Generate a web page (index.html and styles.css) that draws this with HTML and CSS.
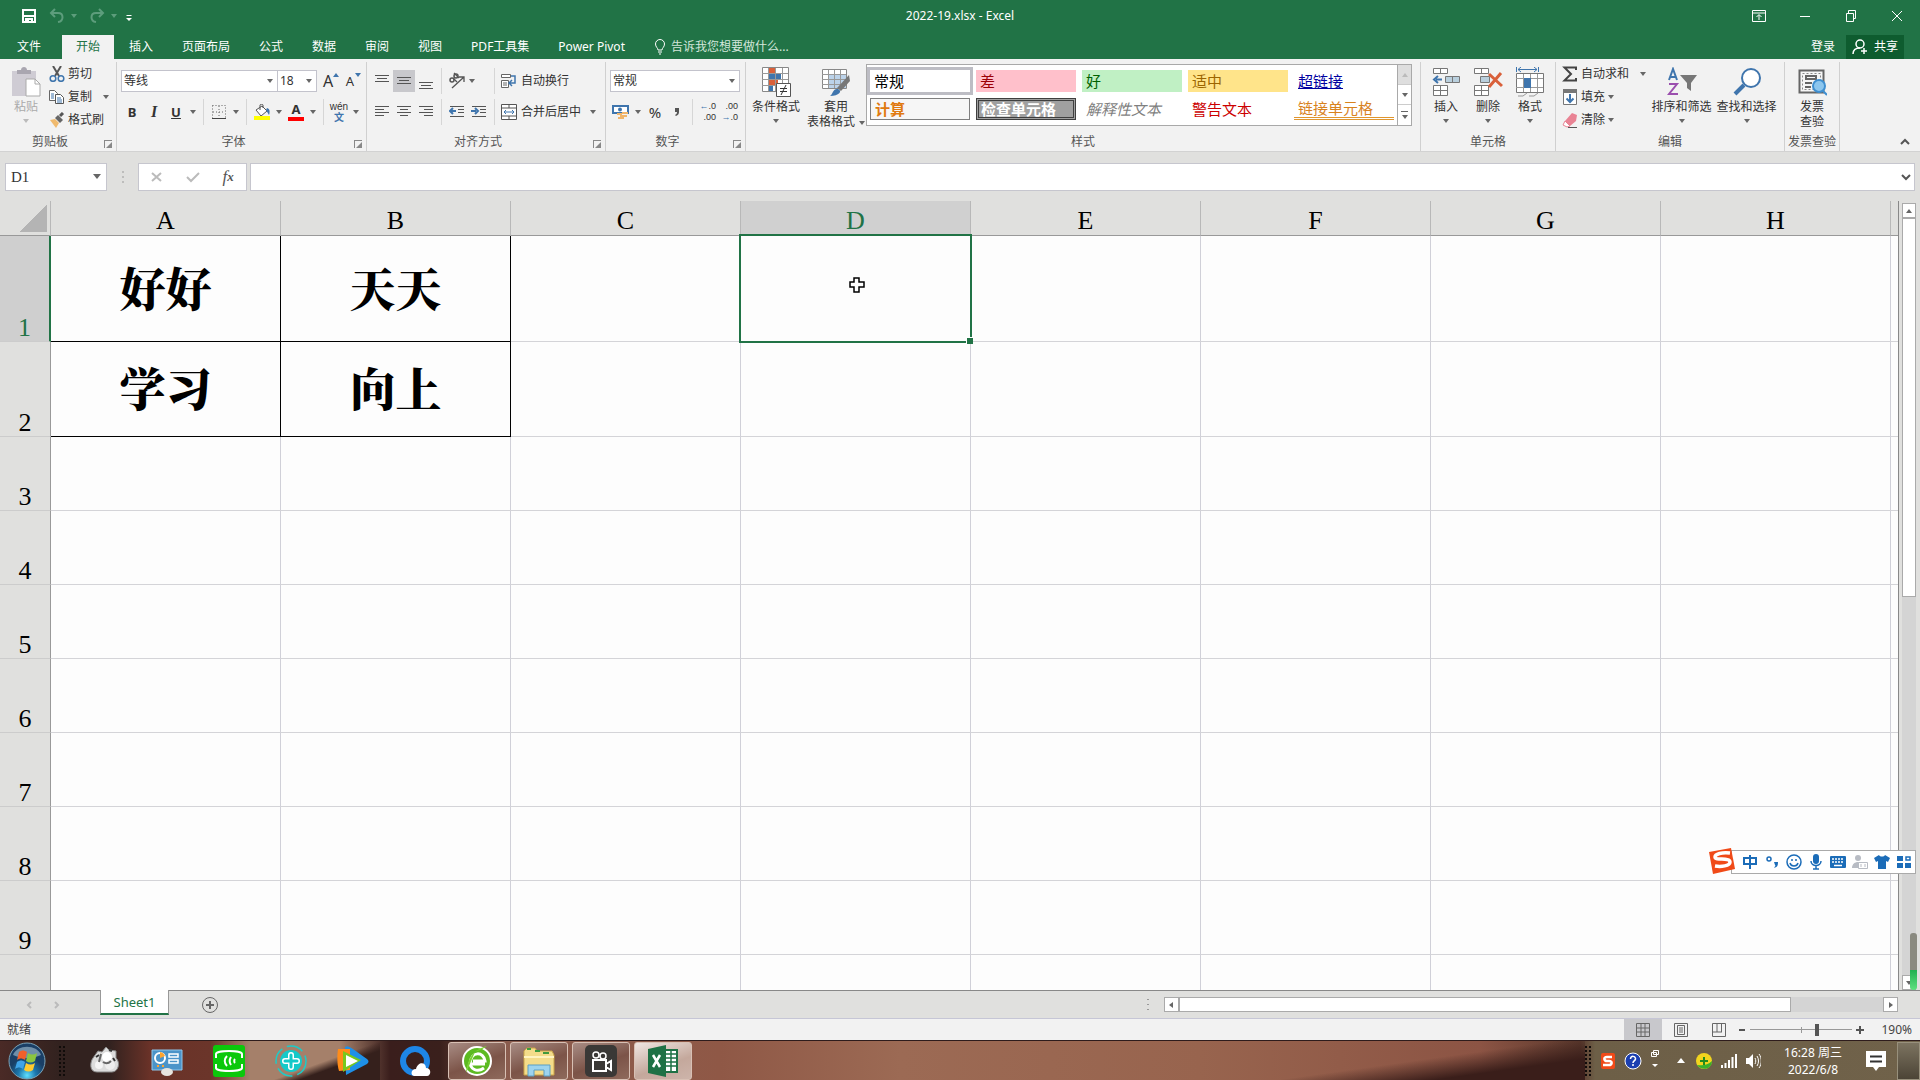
FILE: index.html
```
<!DOCTYPE html>
<html lang="zh-CN">
<head>
  <meta charset="UTF-8" />
  <title>2022-19.xlsx - Excel</title>
  <link rel="stylesheet" href="styles.css">
</head>
<body>
  <!-- title bar + tabs -->
  <header class="header">
    <div class="titlebar">
      <div class="quick">
        <button aria-label="保存"><svg width="16" height="16" viewBox="0 0 16 16"><path d="M2 2h12v12H2z M2 8h12 M5 14v-3h6v3" fill="none" stroke="#fff" stroke-width="2"/><path d="M6 12h2v2H6z" fill="#fff"/></svg></button>
        <button class="faded" aria-label="撤消"><svg width="16" height="16" viewBox="0 0 16 16"><path d="M6 1L2 5l4 4M2 5h7c6 0 6 8 0 9" fill="none" stroke="#5d9d7c" stroke-width="2"/></svg></button>
        <i class="caret faint"></i>
        <button class="faded" aria-label="恢复"><svg width="16" height="16" viewBox="0 0 16 16"><path d="M10 1l4 4-4 4M14 5H7c-6 0-6 8 0 9" fill="none" stroke="#5d9d7c" stroke-width="2"/></svg></button>
        <i class="caret faint"></i>
        <button class="custom" aria-label="自定义"><svg width="8" height="8" viewBox="0 0 8 8"><path d="M1.500 1.500h5" stroke="#fff"/><path d="M1 4h6L4 7z" fill="#fff"/></svg></button>
      </div>
      <div class="doc-title">2022-19.xlsx - Excel</div>
      <div class="window-buttons">
        <button aria-label="功能区显示选项"><svg width="14" height="12" viewBox="0 0 14 12"><path d="M.5.5h13v11H.5zM.5 3h13M7 10V5M4.500 7L7 4.500 9.500 7" fill="none" stroke="#fff"/></svg></button>
        <button aria-label="最小化"><svg width="12" height="12" viewBox="0 0 12 12"><path d="M1 6.500h10" stroke="#fff"/></svg></button>
        <button aria-label="还原"><svg width="12" height="12" viewBox="0 0 12 12"><path d="M1.500 3.500h7v8h-7zM3.500 3V.5h7v8H9" fill="none" stroke="#fff"/></svg></button>
        <button aria-label="关闭"><svg width="12" height="12" viewBox="0 0 12 12"><path d="M1 1l10 10M11 1L1 11" stroke="#fff"/></svg></button>
      </div>
    </div>
    <nav class="tabs">
      <button class="tab file">文件</button>
      <button class="tab active">开始</button>
      <button class="tab">插入</button>
      <button class="tab">页面布局</button>
      <button class="tab">公式</button>
      <button class="tab">数据</button>
      <button class="tab">审阅</button>
      <button class="tab">视图</button>
      <button class="tab">PDF工具集</button>
      <button class="tab">Power Pivot</button>
      <button class="tab tell-me"><svg width="12" height="16" viewBox="0 0 12 16"><path d="M4 11c0-2-2.500-3-2.500-6a4.500 4.500 0 0 1 9 0c0 3-2.500 4-2.500 6zM4 13h4M5 15h2" fill="none" stroke="#fff"/></svg>告诉我您想要做什么...</button>
      <button class="login">登录</button>
      <button class="share"><svg width="16" height="16" viewBox="0 0 16 16"><circle cx="8" cy="5" r="4" fill="none" stroke="#fff" stroke-width="1.500"/><path d="M1 15c0-4 3-6 7-6M12 9v6M9 12h6" fill="none" stroke="#fff" stroke-width="1.500"/></svg>共享</button>
    </nav>
  </header>

  <!-- ribbon -->
  <section class="ribbon">
    <div class="group clipboard">
      <div class="group-body">
        <button class="big disabled">
          <svg width="30" height="30" viewBox="0 0 30 30"><path d="M1 4h24v25H1z" fill="#cfccd4"/><path d="M6 3h4c0-4 6-4 6 0h4v4H6z" fill="#a9a6b0"/><path d="M15 12h9l5 5v12H15z" fill="#fff" stroke="#aaa"/><path d="M24 12v5h5" fill="none" stroke="#aaa"/></svg>
          <span>粘贴</span><i class="caret faint-grey"></i>
        </button>
        <div class="stack">
          <button class="item"><svg width="16" height="16" viewBox="0 0 16 16"><path d="M4 0l6 10M12 0L6 10" stroke="#555" stroke-width="2"/><circle cx="4" cy="12.500" r="2.800" fill="none" stroke="#3f75ad" stroke-width="1.500"/><circle cx="12" cy="12.500" r="2.800" fill="none" stroke="#3f75ad" stroke-width="1.500"/></svg>剪切</button>
          <button class="item"><svg width="16" height="16" viewBox="0 0 16 16"><path d="M.5 1.500h5l3 3v7h-8z" fill="#fff" stroke="#666"/><path d="M6.500 5.500h5l3 3v6h-8z" fill="#fff" stroke="#555"/><path d="M2 5h3M2 7h3M2 9h3M8 9h4M8 11h5M8 13h5" stroke="#3f75ad"/></svg>复制<i class="caret far"></i></button>
          <button class="item"><svg width="16" height="16" viewBox="0 0 16 16"><path d="M1 8l5-1 4 4-3 5z" fill="#f0ba6e"/><path d="M6 6l3-3 5 5-3 3z" fill="#666"/><path d="M11 4l3-3" stroke="#555" stroke-width="3"/></svg>格式刷</button>
        </div>
      </div>
      <div class="group-label">剪贴板</div><i class="launcher"></i>
    </div>

    <div class="group font">
      <div class="group-body rows">
        <div class="row">
          <label class="combo name"><select aria-label="字体"><option>等线</option></select><i class="caret"></i></label>
          <label class="combo size"><select aria-label="字号"><option>18</option></select><i class="caret"></i></label>
          <button class="tool grow" aria-label="增大字号">A<i class="up"></i></button>
          <button class="tool shrink" aria-label="减小字号">A<i class="down"></i></button>
        </div>
        <div class="row">
          <button class="tool"><b>B</b></button>
          <button class="tool serif"><i>I</i></button>
          <button class="tool"><u>U</u></button>
          <i class="drop"></i><i class="sep"></i>
          <button class="tool" aria-label="边框"><svg width="14" height="14" viewBox="0 0 14 14"><path d="M.5.5h13v13H.5zM7 1v12M1 7h12" fill="none" stroke="#666" stroke-dasharray="1 2"/><path d="M0 13.500h14" stroke="#444"/></svg></button>
          <i class="drop"></i><i class="sep"></i>
          <button class="tool" aria-label="填充颜色"><svg width="18" height="16" viewBox="0 0 18 16"><path d="M3 6l6-4 5 5-6 5z" fill="#fff" stroke="#555"/><path d="M7 6V1c0-1 3-1 3 0v3" fill="none" stroke="#555"/><path d="M14 4c3 1 3 4 2 7l-3-5z" fill="#3f75ad"/><path d="M1 12h16v4H1z" fill="#ff0"/></svg></button>
          <i class="drop"></i>
          <button class="tool font-color" aria-label="字体颜色">A</button>
          <i class="drop"></i><i class="sep"></i>
          <button class="tool pinyin"><span>wén</span><span>文</span></button>
          <i class="drop"></i>
        </div>
      </div>
      <div class="group-label">字体</div><i class="launcher"></i>
    </div>

    <div class="group align">
      <div class="group-body rows">
        <div class="row">
          <button class="tool" aria-label="顶端对齐"><svg width="16" height="18" viewBox="0 0 16 18"><path d="M1 3.500h14M3 6.500h10M1 9.500h14" stroke="#555"/></svg></button>
          <button class="tool pressed" aria-label="垂直居中"><svg width="16" height="18" viewBox="0 0 16 18"><path d="M1 5.500h14M3 8.500h10M1 11.500h14" stroke="#555"/></svg></button>
          <button class="tool" aria-label="底端对齐"><svg width="16" height="18" viewBox="0 0 16 18"><path d="M1 10.500h14M3 13.500h10M1 16.500h14" stroke="#555"/></svg></button>
          <i class="sep"></i>
          <button class="tool" aria-label="方向"><svg width="18" height="18" viewBox="0 0 18 18"><circle cx="4" cy="8" r="2" fill="none" stroke="#555" stroke-width="1.500"/><circle cx="8" cy="4" r="2" fill="none" stroke="#555" stroke-width="1.500"/><path d="M5 6l4 4M6 1l5 5M4 16L16 5M11 5h5v5" fill="none" stroke="#555" stroke-width="1.300"/></svg></button>
          <i class="drop wide"></i><i class="sep"></i>
          <button class="tool text"><svg width="16" height="16" viewBox="0 0 16 16"><path d="M.5 1.500h9v3h-9zM.5 7.500h7v7h-7zM2 10h4M2 12h4" fill="#fff" stroke="#666"/><path d="M10 3h4v7h-5M11 7L8 10l3 3" fill="none" stroke="#3f75ad" stroke-width="1.500"/></svg>自动换行</button>
        </div>
        <div class="row">
          <button class="tool" aria-label="左对齐"><svg width="16" height="14" viewBox="0 0 16 14"><path d="M1 1.500h14M1 4.500h9M1 7.500h14M1 10.500h9" stroke="#555"/></svg></button>
          <button class="tool" aria-label="居中"><svg width="16" height="14" viewBox="0 0 16 14"><path d="M1 1.500h14M4 4.500h8M1 7.500h14M4 10.500h8" stroke="#555"/></svg></button>
          <button class="tool" aria-label="右对齐"><svg width="16" height="14" viewBox="0 0 16 14"><path d="M1 1.500h14M6 4.500h9M1 7.500h14M6 10.500h9" stroke="#555"/></svg></button>
          <i class="sep"></i>
          <button class="tool" aria-label="减少缩进"><svg width="16" height="14" viewBox="0 0 16 14"><path d="M1 1.500h14M9 4.500h6M9 7.500h6M1 11.500h14" stroke="#555"/><path d="M7 6H2M4 3L1 6l3 3" fill="none" stroke="#3f75ad" stroke-width="2"/></svg></button>
          <button class="tool" aria-label="增加缩进"><svg width="16" height="14" viewBox="0 0 16 14"><path d="M1 1.500h14M9 4.500h6M9 7.500h6M1 11.500h14" stroke="#555"/><path d="M0 6h5M4 3l3 3-3 3" fill="none" stroke="#3f75ad" stroke-width="2"/></svg></button>
          <i class="sep"></i>
          <button class="tool text"><svg width="16" height="16" viewBox="0 0 16 16"><path d="M.5.500h15v15H.5zM.5 4h15M.5 12h15M8 0v4M8 12v4" fill="#fff" stroke="#555"/><path d="M3 8h10M5 6L3 8l2 2M11 6l2 2-2 2" fill="none" stroke="#3f75ad"/></svg>合并后居中</button>
          <i class="drop end"></i>
        </div>
      </div>
      <div class="group-label">对齐方式</div><i class="launcher"></i>
    </div>

    <div class="group number">
      <div class="group-body rows">
        <div class="row">
          <label class="combo format"><select aria-label="数字格式"><option>常规</option></select><i class="caret"></i></label>
        </div>
        <div class="row">
          <button class="tool" aria-label="会计数字格式"><svg width="18" height="16" viewBox="0 0 18 16"><path d="M1 2h15v7H1z" fill="#fff" stroke="#3f75ad" stroke-width="2"/><circle cx="8" cy="5.500" r="2" fill="#3f75ad"/><path d="M10 9h6M8 12h7M5 10h5M6 14h6" stroke="#f0b56a" stroke-width="2"/></svg></button>
          <i class="drop"></i>
          <button class="tool percent">%</button>
          <button class="tool" aria-label="千位分隔样式"><svg width="6" height="10" viewBox="0 0 6 10"><path d="M1 1h4v4c0 2-1 3-3 4l-1-1c1-1 2-1 2-3H1z" fill="#555"/></svg></button>
          <i class="sep"></i>
          <button class="tool decimal"><span><em>←</em>.0</span><span>.00</span></button>
          <button class="tool decimal"><span>.00</span><span><em>→</em>.0</span></button>
        </div>
      </div>
      <div class="group-label">数字</div><i class="launcher"></i>
    </div>

    <div class="group styles">
      <div class="group-body">
        <button class="big">
          <svg width="30" height="30" viewBox="0 0 30 30"><path d="M1.500.500h26v24h-26z" fill="#fff" stroke="#888"/><path d="M8 1h7v6H8zM8 13h9v6H8z" fill="#d9603a"/><path d="M8 7h12v6H8zM8 19h4v5H8z" fill="#3f75ad"/><path d="M1 6.500h26M1 12.500h26M1 18.500h26M7.500 1v23M14.500 1v23M21.500 1v23" stroke="#999" fill="none"/><path d="M15.500 16.500h14v13h-14z" fill="#fff" stroke="#555"/><path d="M19 21.500h7M19 24.500h7M25 18l-5 10" stroke="#333"/></svg>
          <span>条件格式</span><i class="caret"></i>
        </button>
        <button class="big">
          <svg width="30" height="30" viewBox="0 0 30 30"><path d="M1.500 2.500h24v19h-24z" fill="#fff" stroke="#888"/><path d="M8 8h17v13H8z" fill="#bcd3ea"/><path d="M1 7.500h24M1 12.500h24M1 17.500h24M7.500 3v18M13.500 3v18M19.500 3v18" stroke="#999"/><path d="M28 8l1 6-9 10-4-3z" fill="#777"/><path d="M9 29c3-2 3-8 8-7 5 2 1 7-8 7z" fill="#3f75ad"/></svg>
          <span>套用</span><span>表格格式<i class="caret inline"></i></span>
        </button>
        <div class="gallery">
          <div class="gallery-cells">
            <button class="style selected">常规</button>
            <button class="style bad">差</button>
            <button class="style good">好</button>
            <button class="style neutral">适中</button>
            <button class="style link">超链接</button>
            <button class="style calc">计算</button>
            <button class="style check">检查单元格</button>
            <button class="style explain">解释性文本</button>
            <button class="style warn">警告文本</button>
            <button class="style linked">链接单元格</button>
          </div>
          <div class="gallery-scroll">
            <button class="off" aria-label="上"><i class="caret flip"></i></button>
            <button aria-label="下"><i class="caret"></i></button>
            <button class="more" aria-label="其他"><i class="line"></i><i class="caret"></i></button>
          </div>
        </div>
      </div>
      <div class="group-label">样式</div>
    </div>

    <div class="group cells">
      <div class="group-body">
        <button class="big">
          <svg width="30" height="30" viewBox="0 0 30 30"><path d="M2.500 1.500h14v5h-14zM9.500 1v6M2.500 18.500h14v10h-14zM9.500 18v11M2 23.500h15" fill="#fff" stroke="#777"/><path d="M14.500 9.500h14v6h-14zM21.500 9v7" fill="#b9cfdd" stroke="#777"/><path d="M11 12.500H5M7 9l-4 3.500L7 16" fill="none" stroke="#3f75ad" stroke-width="2"/></svg>
          <span>插入</span><i class="caret"></i>
        </button>
        <button class="big">
          <svg width="30" height="30" viewBox="0 0 30 30"><path d="M1.500 1.500h14v5h-14zM8.500 1v6M1.500 18.500h14v10h-14zM8.500 18v11M1 23.500h15" fill="#fff" stroke="#777"/><path d="M7.500 9.500h9v6h-9z" fill="#b9cfdd" stroke="#777"/><path d="M16 7l13 12M28 6L16 20" fill="none" stroke="#d9603a" stroke-width="3"/></svg>
          <span>删除</span><i class="caret"></i>
        </button>
        <button class="big">
          <svg width="30" height="30" viewBox="0 0 30 30"><path d="M1.500 6.500h27v19h-27z" fill="#fff" stroke="#777"/><path d="M1 11.500h27M1 20.500h27M8.500 7v18M15.500 7v18M22.500 7v18M3 29h5l4-3M14 29h5l4-3" fill="none" stroke="#999"/><path d="M9 11h7v10H9z" fill="#3f75ad"/><path d="M1.500 0v5M23.500 0v5M3 2.500h19M6 0L3 2.500 6 5M19 0l3 2.500L19 5" fill="none" stroke="#3f75ad"/></svg>
          <span>格式</span><i class="caret"></i>
        </button>
      </div>
      <div class="group-label">单元格</div>
    </div>

    <div class="group edit">
      <div class="group-body">
        <div class="stack">
          <button class="item"><svg width="16" height="16" viewBox="0 0 16 16"><path d="M14 4V1.500H2.500L9 8l-6.500 6.500H14V12" fill="none" stroke="#444" stroke-width="2"/></svg>自动求和<i class="caret far"></i></button>
          <button class="item"><svg width="16" height="16" viewBox="0 0 16 16"><path d="M1.500.500h13v15h-13z" fill="#fff" stroke="#777"/><path d="M1 0h14v4H1z" fill="#777"/><path d="M8 5v8M4.500 9.500L8 13l3.500-3.500" fill="none" stroke="#3f75ad" stroke-width="2"/></svg>填充<i class="caret"></i></button>
          <button class="item"><svg width="16" height="16" viewBox="0 0 16 16"><path d="M3 9l7-8 5 2-1 6-6 5z" fill="#e98394"/><path d="M3 9l5 5-3 1-4-2z" fill="#fff" stroke="#e98394"/><path d="M6 15.500h9" stroke="#555"/></svg>清除<i class="caret"></i></button>
        </div>
        <button class="big">
          <svg width="30" height="30" viewBox="0 0 30 30"><path d="M2 13L6 2l4 11M3 10h6" fill="none" stroke="#3f75ad" stroke-width="2"/><path d="M2 17h8L2 27h9" fill="none" stroke="#9b4fae" stroke-width="2"/><path d="M13 8h17l-6 8v8l-4-3v-5z" fill="#777"/></svg>
          <span>排序和筛选</span><i class="caret"></i>
        </button>
        <button class="big">
          <svg width="30" height="30" viewBox="0 0 30 30"><circle cx="19" cy="11" r="9" fill="#fff" stroke="#3f75ad" stroke-width="2"/><path d="M12 18L3 27" stroke="#3f75ad" stroke-width="4"/></svg>
          <span>查找和选择</span><i class="caret"></i>
        </button>
      </div>
      <div class="group-label">编辑</div>
    </div>

    <div class="group invoice">
      <div class="group-body">
        <button class="big">
          <svg width="30" height="30" viewBox="0 0 30 30"><path d="M2.500 3.500h24v22h-24z" fill="#f6f6f6" stroke="#666" stroke-width="2"/><path d="M5.500 6.500h18v16h-18z" fill="none" stroke="#888" stroke-dasharray="2 2"/><path d="M9 9h10v3H9zM8 16h7M8 20h6" fill="none" stroke="#666" stroke-width="2"/><circle cx="22" cy="19" r="6" fill="#8cc6ee" stroke="#3f8fd0" stroke-width="2"/><path d="M26 24l4 4" stroke="#3f8fd0" stroke-width="2"/></svg>
          <span>发票</span><span>查验</span>
        </button>
      </div>
      <div class="group-label">发票查验</div>
    </div>
    <button class="collapse" aria-label="折叠功能区"><svg width="10" height="8" viewBox="0 0 10 8"><path d="M1 6l4-4 4 4" fill="none" stroke="#555" stroke-width="2"/></svg></button>
  </section>

  <!-- formula bar -->
  <section class="formula">
    <label class="name-box"><input type="text" value="D1" aria-label="名称框"><i class="caret big-caret"></i></label>
    <span class="dots"></span>
    <div class="fx-box">
      <button aria-label="取消"><svg width="12" height="12" viewBox="0 0 12 12"><path d="M1 2l9 8M10 2l-9 8" stroke="#bbb" stroke-width="2"/></svg></button>
      <button aria-label="输入"><svg width="14" height="12" viewBox="0 0 14 12"><path d="M1 6l4 4 8-8" fill="none" stroke="#bbb" stroke-width="2"/></svg></button>
      <button class="fx">f<small>x</small></button>
    </div>
    <div class="formula-input">
      <input type="text" aria-label="编辑栏">
      <svg width="10" height="8" viewBox="0 0 10 8"><path d="M1 2l4 4 4-4" fill="none" stroke="#555" stroke-width="2"/></svg>
    </div>
  </section>

  <!-- sheet -->
  <main class="sheet-area">
    <div class="sheet">
      <table>
        <colgroup><col class="c-head"><col><col><col><col><col><col><col><col><col class="c-rest"></colgroup>
        <thead>
          <tr><th class="corner"></th><th>A</th><th>B</th><th>C</th><th class="current">D</th><th>E</th><th>F</th><th>G</th><th>H</th><th></th></tr>
        </thead>
        <tbody>
          <tr class="r1"><th class="current">1</th><td class="boxed">好好</td><td class="boxed">天天</td><td></td><td class="cursor-cell"><div class="selection"></div><svg class="pointer" width="16" height="16" viewBox="0 0 16 16"><path d="M5 1h5v4h5v5h-5v5H5v-5H1V5h4z" fill="#fff" stroke="#000" stroke-width="1.500"/></svg></td><td></td><td></td><td></td><td></td><td></td></tr>
          <tr class="r2"><th>2</th><td class="boxed">学习</td><td class="boxed">向上</td><td></td><td></td><td></td><td></td><td></td><td></td><td></td></tr>
          <tr><th>3</th><td></td><td></td><td></td><td></td><td></td><td></td><td></td><td></td><td></td></tr>
          <tr><th>4</th><td></td><td></td><td></td><td></td><td></td><td></td><td></td><td></td><td></td></tr>
          <tr><th>5</th><td></td><td></td><td></td><td></td><td></td><td></td><td></td><td></td><td></td></tr>
          <tr><th>6</th><td></td><td></td><td></td><td></td><td></td><td></td><td></td><td></td><td></td></tr>
          <tr><th>7</th><td></td><td></td><td></td><td></td><td></td><td></td><td></td><td></td><td></td></tr>
          <tr><th>8</th><td></td><td></td><td></td><td></td><td></td><td></td><td></td><td></td><td></td></tr>
          <tr><th>9</th><td></td><td></td><td></td><td></td><td></td><td></td><td></td><td></td><td></td></tr>
          <tr class="last"><th></th><td></td><td></td><td></td><td></td><td></td><td></td><td></td><td></td><td></td></tr>
        </tbody>
      </table>
    </div>
    <div class="vscroll">
      <button aria-label="向上滚动"><i class="caret flip"></i></button>
      <div class="track"><div class="thumb"></div></div>
      <button aria-label="向下滚动"><i class="caret"></i></button>
      <div class="meter"></div>
    </div>
  </main>

  <section class="sheet-bar">
    <div class="sheet-nav"><svg width="6" height="8" viewBox="0 0 6 8"><path d="M5 1L2 4l3 3" fill="none" stroke="#bbb" stroke-width="2"/></svg><svg width="6" height="8" viewBox="0 0 6 8"><path d="M1 1l3 3-3 3" fill="none" stroke="#bbb" stroke-width="2"/></svg></div>
    <button class="sheet-tab">Sheet1</button>
    <button class="add-sheet" aria-label="新工作表"><svg width="18" height="18" viewBox="0 0 18 18"><circle cx="9" cy="9" r="7.500" fill="none" stroke="#666"/><path d="M9 5v8M5 9h8" stroke="#666" stroke-width="2"/></svg></button>
    <div class="hscroll">
      <span class="dots"></span>
      <button aria-label="向左滚动"><i class="caret left"></i></button>
      <div class="track"><div class="thumb"></div></div>
      <button aria-label="向右滚动"><i class="caret right"></i></button>
    </div>
  </section>

  <footer class="status">
    <span>就绪</span>
    <div class="views">
      <button class="on" aria-label="普通"><svg width="14" height="14" viewBox="0 0 14 14"><path d="M.5.500h13v13H.5zM5 1v12M9 1v12M1 5h12M1 9h12" fill="none" stroke="#666"/></svg></button>
      <button aria-label="页面布局"><svg width="14" height="14" viewBox="0 0 14 14"><path d="M.5.500h13v13H.5zM3.500 2.500h7v9h-7zM5 5h4M5 7h4M5 9h4" fill="none" stroke="#666"/></svg></button>
      <button aria-label="分页预览"><svg width="14" height="14" viewBox="0 0 14 14"><path d="M.5.500h13v13H.5zM5 1v8M9.500 1v8M1 9h9" fill="none" stroke="#666"/></svg></button>
    </div>
    <div class="zoom">
      <button aria-label="缩小"><svg width="8" height="8" viewBox="0 0 8 8"><path d="M1 4h6" stroke="#555" stroke-width="2"/></svg></button>
      <input type="range" min="0" max="100" value="66" aria-label="缩放">
      <button aria-label="放大"><svg width="8" height="8" viewBox="0 0 8 8"><path d="M0 4h8M4 0v8" stroke="#555" stroke-width="2"/></svg></button>
      <span>190%</span>
    </div>
  </footer>

  <!-- taskbar -->
  <section class="taskbar">
    <button class="start" aria-label="开始"><svg width="38" height="38" viewBox="0 0 38 38"><defs><radialGradient id="orb" cy=".9"><stop offset="0" stop-color="#5fe0ff"/><stop offset=".5" stop-color="#1b77ad"/><stop offset="1" stop-color="#1a3f66"/></radialGradient></defs><circle cx="19" cy="19" r="18" fill="url(#orb)" stroke="#7aa3b8"/><path d="M5 13C9 2 29 2 33 13c-8 4-20 4-28 0z" fill="#a8c4d6" opacity=".6"/><path d="M11 10c3-2 5-2 8 0l-2 8c-3-2-5-2-8 0z" fill="#f0602a"/><path d="M20 11c3 2 6 2 9 0l-2 8c-3 2-6 2-9 0z" fill="#8cc63f"/><path d="M9 20c3-2 5-2 8 0l-2 7c-3-2-5-2-8 0z" fill="#3fa4e8"/><path d="M18 21c3 2 6 2 9 0l-2 7c-3 2-6 2-9 0z" fill="#ffcb2e"/></svg></button>
    <i class="grip"></i>
    <button class="app" aria-label="应用"><svg width="32" height="32" viewBox="0 0 32 32"><path d="M4 13l5-7 4 1 4-5 3 3 7 1v7c5 5 2 14-4 14H8C0 27 1 17 4 13z" fill="#dcdcdc" stroke="#888"/><path d="M7 12l3-2M10 19l3-1M20 5l3 1M24 13l2 3" stroke="#333" stroke-width="2"/><circle cx="18" cy="12" r="5" fill="#fff"/><circle cx="10" cy="20" r="4" fill="#f4f4f4"/><circle cx="21" cy="20" r="5" fill="#eee"/><path d="M12 9l-2 8M14 17c3 2 6 1 8-1" fill="none" stroke="#666" stroke-width="2"/></svg></button>
    <button class="app" aria-label="控制面板"><svg width="32" height="32" viewBox="0 0 32 32"><path d="M1 5h30v20H1z" fill="#4b94c9" stroke="#8fc7ec"/><circle cx="9" cy="13" r="5" fill="none" stroke="#fff" stroke-width="2"/><path d="M9 13V7a6 6 0 0 1 5 4z" fill="#ffa52e"/><path d="M18 9h9v3h-9zM18 15h9v3h-9z" fill="none" stroke="#fff" stroke-width="1.500"/><path d="M6 21h2M11 21h2" stroke="#ffa52e" stroke-width="2"/><ellipse cx="16" cy="27" rx="6" ry="4" fill="#e8e4df"/></svg></button>
    <button class="app" aria-label="投屏"><svg width="32" height="32" viewBox="0 0 32 32"><rect width="32" height="32" rx="3" fill="#0bc80b"/><path d="M3 13V9c0-4 26-4 26 0v4M3 19v4c0 4 26 4 26 0v-4" fill="none" stroke="#fff" stroke-width="2"/><path d="M14 11c-3 3-3 7 0 10M18 12c-2 3-2 5 0 8M22 14c-1 1-1 3 0 4" fill="none" stroke="#fff" stroke-width="2"/></svg></button>
    <button class="app" aria-label="医疗"><svg width="32" height="32" viewBox="0 0 32 32"><circle cx="16" cy="16" r="15" fill="none" stroke="#1ccbc8" stroke-width="1.500" stroke-dasharray="17 5"/><circle cx="16" cy="16" r="11" fill="#14c9c8"/><path d="M13 10a3 3 0 0 1 6 0v12a3 3 0 0 1-6 0zM10 13h12a3 3 0 0 1 0 6H10a3 3 0 0 1 0-6z" fill="#fff"/><path d="M14.500 10a1.500 1.500 0 0 1 3 0v12a1.500 1.500 0 0 1-3 0zM10 14.500h12a1.500 1.500 0 0 1 0 3H10a1.500 1.500 0 0 1 0-3z" fill="#14c9c8"/></svg></button>
    <button class="app" aria-label="播放器"><svg width="32" height="32" viewBox="0 0 32 32"><path d="M8 2c3-2 5 0 22 12 2 2 2 3 0 5L9 30z" fill="#1e90e8"/><path d="M1 4h12v21L2 26c-2-6-2-16-1-22z" fill="#ff8c1a"/><path d="M6 6l18 9-18 12z" fill="#78c81e"/><path d="M9 10l12 6-12 6z" fill="#fff"/></svg></button>
    <button class="app" aria-label="浏览器"><svg width="32" height="32" viewBox="0 0 32 32"><circle cx="16" cy="16" r="12" fill="none" stroke="#1e86e6" stroke-width="6"/><path d="M15 31c-4-1-3-7 2-7 2-8 10-7 10-1 6 0 5 8 1 8z" fill="#fff"/></svg></button>
    <div class="running">
      <button class="win" aria-label="360浏览器"><svg width="32" height="32" viewBox="0 0 32 32"><circle cx="16" cy="16" r="14" fill="#5cba22" stroke="#fff" stroke-width="2"/><path d="M24 19H9c1-14 14-12 15-3H12M23 23c-7 5-14 1-14-6" fill="none" stroke="#fff" stroke-width="3"/><path d="M5 28C7 10 15 4 26 1c-5 4-8 4-12 6" fill="#7ad332"/></svg></button>
      <button class="win" aria-label="资源管理器"><svg width="34" height="32" viewBox="0 0 34 32"><path d="M2 6l3-3h8l2 3h15l2 4v20H2z" fill="#f4dc8a" stroke="#c9a449"/><path d="M5 4h4M13 6h5M21 8h6" stroke="#3f9a3f" stroke-width="2"/><path d="M2 12h30" stroke="#fff3c0" stroke-width="2"/><path d="M6 31V20h22v11h-6v-6H12v6z" fill="#9dd3ee" stroke="#5b9fc4"/></svg></button>
      <button class="win" aria-label="录屏"><svg width="32" height="32" viewBox="0 0 32 32"><rect width="32" height="32" rx="5" fill="#3a3836"/><circle cx="11" cy="10" r="3" fill="none" stroke="#fff" stroke-width="1.500"/><circle cx="18" cy="11" r="3" fill="none" stroke="#fff" stroke-width="1.500"/><path d="M8 15h13v11H8zM21 19l5-3v9l-5-3" fill="none" stroke="#fff" stroke-width="2"/></svg></button>
      <button class="win active" aria-label="Excel"><svg width="30" height="32" viewBox="0 0 30 32"><path d="M16 5h13v22H16z" fill="#fff" stroke="#1e7145" stroke-width="2"/><path d="M16 9h12M16 13h12M16 17h12M16 21h12M23 6v20" stroke="#1e7145" stroke-width="1.500"/><path d="M0 4l18-4v32L0 28z" fill="#1e7145"/><path d="M5 10l7 12M12 10L5 22" stroke="#fff" stroke-width="2.500"/></svg></button>
    </div>
    <div class="tray">
      <i class="grip"></i>
      <svg class="t-s" width="16" height="18" viewBox="0 0 16 18"><rect x="1" y="1" width="14" height="16" rx="2" fill="#f04a18"/><path d="M12 5H7c-4 0-3 4 0 4h2c4 0 3 4 0 4H3" fill="none" stroke="#fff" stroke-width="2.500"/></svg>
      <svg class="t-help" width="18" height="18" viewBox="0 0 18 18"><circle cx="9" cy="9" r="8" fill="#1b3fb0" stroke="#fff"/><path d="M6.500 7c0-4 5.500-3 5 0-.5 2-2.500 2-2.500 4M9 12v2" fill="none" stroke="#fff" stroke-width="1.500"/></svg>
      <svg class="t-restore" width="10" height="20" viewBox="0 0 10 20"><path d="M3.500 1.500h5v4h-5zM1.500 3.500h5v4h-5z" fill="none" stroke="#fff"/><path d="M2 15h6l-3 3z" fill="#fff"/></svg>
      <i class="caret white flip"></i>
      <svg width="18" height="18" viewBox="0 0 18 18"><circle cx="9" cy="9" r="8" fill="#f2d51e"/><path d="M2 13c4 6 15 5 15-4-4 4-9 5-15 4z" fill="#39b02c"/><path d="M9 5v8M5 9h8" stroke="#238c1e" stroke-width="2"/></svg>
      <svg width="16" height="16" viewBox="0 0 16 16"><path d="M1 15v-3M4.500 15v-5M8 15V7M11.500 15V4M15 15V1" stroke="#fff" stroke-width="2"/></svg>
      <svg width="16" height="16" viewBox="0 0 16 16"><path d="M1 5h3l4-4v14l-4-4H1z" fill="#fff"/><path d="M10 5c1 2 1 4 0 6M12 3c2 3 2 7 0 10M14 1c3 4 3 10 0 14" fill="none" stroke="#fff"/></svg>
      <div class="clock"><span>16:28 周三</span><span>2022/6/8</span></div>
      <svg class="t-note" width="22" height="22" viewBox="0 0 22 22"><path d="M1 1h20v16h-7l-3 4-3-4H1z" fill="#fff"/><path d="M5 6.500h12M5 11.500h12" stroke="#333" stroke-width="2"/></svg>
      <button class="show-desktop" aria-label="显示桌面"></button>
    </div>
  </section>

  <!-- input method toolbar -->
  <div class="ime">
    <svg class="ime-logo" width="28" height="28" viewBox="0 0 28 28"><path d="M1 5l22-4 4 21-22 5z" fill="#f04a18"/><path d="M22 6c-8-1-15 1-15 4 0 4 15 0 15 5 0 4-9 5-15 4" fill="none" stroke="#fff" stroke-width="3.500"/></svg>
    <svg viewBox="0 0 16 16"><path d="M2 4h12v6H2zM8 1v14" fill="none" stroke="#1b6cb8" stroke-width="2"/></svg>
    <svg viewBox="0 0 16 16"><circle cx="5" cy="5" r="2" fill="none" stroke="#1b6cb8" stroke-width="1.500"/><path d="M10 8h4c0 4-1 5-4 6 1-2 2-2 1-3z" fill="#1b6cb8"/></svg>
    <svg viewBox="0 0 16 16"><circle cx="8" cy="8" r="7" fill="none" stroke="#1b6cb8" stroke-width="1.500"/><path d="M6 5v2M10 5v2M4 9c1 4 7 4 8 0" fill="none" stroke="#1b6cb8" stroke-width="1.500"/></svg>
    <svg viewBox="0 0 16 16"><rect x="5" y="0" width="6" height="10" rx="3" fill="#1b6cb8"/><path d="M3 7c0 6 10 6 10 0M8 12v3M5 15h6" fill="none" stroke="#1b6cb8" stroke-width="1.500"/></svg>
    <svg viewBox="0 0 16 16"><rect x="0" y="2" width="16" height="12" rx="1" fill="#1b6cb8"/><path d="M2 5h12M2 8h12" stroke="#fff" stroke-width="1.500" stroke-dasharray="2 1"/><path d="M4 11.500h8" stroke="#fff" stroke-width="1.500"/></svg>
    <svg viewBox="0 0 16 16"><circle cx="6" cy="4" r="3" fill="#b8bcc4"/><path d="M0 14c0-8 12-8 12 0z" fill="#b8bcc4"/><path d="M6.500 8.500h9v6h-9zM9 10v3M13 10v3" fill="#fff" stroke="#b8bcc4"/></svg>
    <svg viewBox="0 0 16 16"><path d="M5 1c1 2 5 2 6 0l5 3-2 4-2-1v8H4V7L2 8 0 4z" fill="#1b6cb8"/></svg>
    <svg viewBox="0 0 16 16"><path d="M1 2h6v5H1zM1 9h6v5H1zM9 9h6v5H9z" fill="#1b6cb8"/><path d="M10 3h4v3h-4z" fill="none" stroke="#1b6cb8" stroke-width="1.500"/></svg>
  </div>
</body>
</html>
```
FILE: styles.css
```
* {
  box-sizing: border-box;
}

body {
  margin: 0;
  height: 100vh;
  display: flex;
  flex-direction: column;
  overflow: hidden;
  position: relative;
  background: #e0e0de;
  color: #333;
  font-family: "Noto Sans", "Noto Sans CJK SC", sans-serif;
  font-size: 12px;
  line-height: 16px;
}

button, input, select {
  margin: 0;
  padding: 0;
  border: 0;
  border-radius: 0;
  background: none;
  color: inherit;
  font: inherit;
}

button {
  display: flex;
  align-items: center;
  justify-content: center;
  white-space: nowrap;
}

svg {
  flex: none;
  display: block;
}

/* small drop-down triangles */
.caret {
  flex: none;
  width: 0;
  height: 0;
  border: 3px solid transparent;
  border-top: 4px solid #666;
  border-bottom: 0;
}

.caret.flip { transform: rotate(180deg); }
.caret.left { transform: rotate(90deg); }
.caret.right { transform: rotate(-90deg); }
.caret.faint { border-top-color: #5d9d7c; }
.caret.faint-grey { border-top-color: #bbb; }
.caret.white { border-width: 5px 4px 0; border-top-color: #fff; }
.caret.far { margin-left: 8px; }
.caret.inline {
  display: inline-block;
  margin-left: 4px;
  vertical-align: middle;
}

/* header */
.header {
  flex: none;
  background: #217346;
  color: #fff;
}

.titlebar {
  height: 35px;
  padding-bottom: 4px;
  display: grid;
  grid-template-columns: 1fr auto 1fr;
  align-items: center;
}

.quick {
  display: flex;
  align-items: center;
  gap: 6px;
  padding-left: 21px;
}

.quick .faded { margin-left: 6px; }
.quick .custom { margin: 4px 0 0 2px; }

.window-buttons {
  display: flex;
  justify-content: flex-end;
}

.window-buttons button {
  width: 46px;
  height: 28px;
}

.tabs {
  display: flex;
  height: 24px;
  gap: 1px;
}

.tab {
  padding: 0 14px;
}

.tab.file {
  width: 58px;
  margin-right: 3px;
}

.tab.active {
  background: #f2f2f2;
  color: #217346;
}

.tab.tell-me {
  gap: 5px;
  color: #d3e6db;
}

.login {
  margin-left: auto;
  padding: 0 10px;
}

.share {
  gap: 6px;
  width: 58px;
  margin-right: 16px;
  background: #0e5c2f;
}

/* ribbon */
.ribbon {
  flex: none;
  height: 93px;
  display: flex;
  background: #f2f2f2;
  border-bottom: 1px solid #d2d2d2;
}

.group {
  position: relative;
  flex: none;
  display: flex;
  flex-direction: column;
  margin-top: 3px;
  border-right: 1px solid #d0d0d0;
}

.clipboard { width: 117px; }
.font { width: 250px; }
.align { width: 239px; }
.number { width: 140px; }
.styles { width: 675px; }
.cells { width: 135px; }
.edit { width: 229px; }
.invoice { width: 55px; }

.group-body {
  flex: 1;
  display: flex;
}

.clipboard .group-body { padding-left: 6px; }
.cells .group-body { padding-left: 4px; }
.edit .group-body { padding-left: 6px; }

.group-label {
  height: 17px;
  text-align: center;
  white-space: nowrap;
  color: #555;
}

.clipboard .group-label,
.font .group-label,
.align .group-label,
.number .group-label {
  padding-right: 16px;
}

.launcher {
  position: absolute;
  right: 4px;
  bottom: 3px;
  width: 8px;
  height: 8px;
  border: 1px solid #888;
  border-right: 0;
  border-bottom: 0;
}

.launcher::after {
  content: "";
  position: absolute;
  right: 0;
  bottom: 0;
  border: 3px solid #888;
  border-top-color: transparent;
  border-left-color: transparent;
}

.big {
  flex-direction: column;
  justify-content: flex-start;
  padding-top: 5px;
  line-height: 15px;
}

.big svg { margin-bottom: 2px; }
.big > .caret { margin-top: 5px; }
.clipboard .big { width: 40px; }
.styles .big { width: 60px; }
.cells .big { width: 42px; }
.edit .big { width: 65px; }
.invoice .big { width: 54px; }
.big.disabled { color: #aaa; }

.stack {
  display: flex;
  flex-direction: column;
}

.clipboard .stack { padding-left: 3px; }
.edit .stack { width: 87px; }

.item {
  height: 23px;
  justify-content: flex-start;
  gap: 3px;
}

.rows {
  flex-direction: column;
  gap: 9px;
  padding: 8px 0 0 4px;
}

.row {
  display: flex;
  height: 22px;
}

.combo {
  position: relative;
  display: flex;
  border: 1px solid #c3c3cc;
  background: #fff;
}

.combo select {
  appearance: none;
  width: 100%;
  padding-left: 2px;
}

.combo .caret {
  position: absolute;
  right: 4px;
  top: 8px;
}

.combo.name { width: 157px; }
.combo.size { width: 40px; margin-left: -1px; }
.combo.format { width: 130px; }

.tool {
  width: 22px;
  font-size: 13px;
}

.tool.text {
  width: auto;
  padding-left: 2px;
  gap: 4px;
  font-size: 12px;
}

.tool.pressed { background: #c8c8cc; }
.tool.serif { font-family: "Liberation Serif", serif; font-size: 16px; font-weight: bold; }
.tool u { font-weight: bold; }

.tool.grow,
.tool.shrink {
  position: relative;
  font-size: 16px;
}

.tool.shrink { font-size: 13px; }

.up, .down {
  position: absolute;
  top: 3px;
  right: 0;
  border: 3px solid transparent;
}

.up { border-bottom: 4px solid #3f75ad; border-top: 0; }
.down { border-top: 4px solid #3f75ad; border-bottom: 0; }

.font-color {
  height: 20px;
  border-bottom: 4px solid #f00;
  font-weight: bold;
  width: 16px;
  margin: 0 3px;
}

.pinyin {
  flex-direction: column;
  font-family: "Liberation Sans", "Noto Sans CJK SC", sans-serif;
  font-size: 10px;
  line-height: 11px;
}

.pinyin span:last-child { color: #3f75ad; font-weight: bold; }

.drop {
  width: 12px;
  display: flex;
  align-items: center;
  justify-content: center;
}

.drop::after {
  content: "";
  border: 3px solid transparent;
  border-top: 4px solid #666;
  border-bottom: 0;
}

.drop.wide { width: 22px; justify-content: flex-start; padding-left: 1px; }
.drop.end { margin-left: 6px; }

.sep {
  width: 1px;
  height: 26px;
  margin: -2px 4px;
  background: #d6d6d6;
}

.percent { font-size: 15px; }

.decimal {
  flex-direction: column;
  align-items: flex-end;
  font-family: "Liberation Sans", sans-serif;
  font-size: 9px;
  line-height: 11px;
  padding-right: 3px;
}

.decimal em { color: #3f75ad; font-style: normal; }

/* cell styles gallery */
.gallery {
  display: flex;
  width: 546px;
  height: 62px;
  margin-top: 2px;
  border: 1px solid #a9a9a9;
  background: #fff;
}

.gallery-cells {
  flex: 1;
  display: grid;
  grid-template-columns: repeat(5, 100px);
  grid-template-rows: 22px 22px;
  gap: 6px;
  padding: 5px 3px;
}

.style {
  justify-content: flex-start;
  padding-left: 4px;
  font-size: 15px;
  line-height: 20px;
  color: #000;
}

.style.selected { outline: 3px solid #bdbdc4; }
.style.bad { background: #ffc0cb; color: #9c0006; }
.style.good { background: #c0f0c4; color: #006100; }
.style.neutral { background: #ffe48a; color: #9c6500; }
.style.link { color: #0000a0; text-decoration: underline; }
.style.calc { border: 1px solid #7f7f7f; background: #f6f6f6; color: #e07a10; font-weight: bold; }
.style.check { border: 3px double #3f3f3f; background: #a0a0a0; color: #fff; font-weight: bold; padding-left: 2px; }
.style.explain { color: #7f7f7f; font-style: italic; }
.style.warn { color: #c00; }
.style.linked { border-bottom: 3px double #e0962e; color: #d8821e; }

.gallery-scroll {
  width: 15px;
  border-left: 1px solid #a9a9a9;
}

.gallery-scroll button {
  width: 100%;
  height: 20px;
  border-bottom: 1px solid #ccc;
}

.gallery-scroll .off { background: #dedede; }
.gallery-scroll .off .caret { border-top-color: #bbb; }

.gallery-scroll .more {
  flex-direction: column;
  gap: 3px;
  border-bottom: 0;
}

.line {
  width: 7px;
  height: 1px;
  background: #666;
}

.collapse {
  margin-left: auto;
  align-self: flex-end;
  width: 30px;
  height: 18px;
}

/* formula bar */
.formula {
  flex: none;
  display: flex;
  height: 49px;
  padding: 11px 5px 10px;
}

.name-box,
.fx-box,
.formula-input {
  display: flex;
  align-items: center;
  border: 1px solid #c6c6ce;
  background: #fff;
}

.name-box {
  position: relative;
  width: 102px;
}

.name-box input {
  width: 80px;
  padding-left: 5px;
  font-family: "Liberation Serif", serif;
  font-size: 15px;
}

.big-caret {
  position: absolute;
  right: 5px;
  top: 10px;
  border-width: 5px 4px 0;
}

.dots {
  width: 31px;
  margin: 7px 0;
  background: radial-gradient(circle, #999 1px, transparent 1px) center / 4px 5px repeat-y;
}

.fx-box {
  width: 109px;
  margin-right: 3px;
}

.fx-box button { flex: 1; }
.fx { font-family: "Liberation Serif", serif; font-size: 17px; font-style: italic; color: #555; }
.fx small { font-size: 13px; font-weight: bold; }

.formula-input { flex: 1; }
.formula-input input { flex: 1; padding-left: 5px; }
.formula-input svg { margin-right: 3px; }

/* sheet */
.sheet-area {
  flex: 1;
  min-height: 0;
  display: flex;
}

.sheet {
  flex: 1;
  min-width: 0;
  overflow: hidden;
  border-right: 1px solid #888;
}

table {
  width: 100%;
  table-layout: fixed;
  border-spacing: 0;
}

col { width: 230px; }
.c-head { width: 51px; }
.c-rest { width: auto; }

th, td {
  padding: 0;
  overflow: hidden;
}

th {
  background: #e0e0de;
  color: #000;
  font: 26px/26px "Liberation Serif", serif;
}

thead th {
  height: 35px;
  border-right: 1px solid #b8b8b8;
  border-bottom: 1px solid #999;
  vertical-align: bottom;
  padding-bottom: 1px;
}

thead th.current {
  background: #d0d0d0;
  color: #217346;
}

thead .corner {
  background: linear-gradient(135deg, transparent 50%, #b4b4b4 50%) 20px 4px / 27px 27px no-repeat #e0e0de;
}

tbody th {
  height: 74px;
  border-right: 1px solid #999;
  border-bottom: 1px solid #ccc;
  vertical-align: bottom;
}

tbody th.current {
  background: #cfcfcf;
  color: #217346;
  border-right: 2px solid #217346;
}

td {
  border-right: 1px solid #d0d0d8;
  border-bottom: 1px solid #d4d4d8;
  background: #fdfdfd;
  color: #000;
  text-align: center;
  font: 900 46px/56px "Noto Serif CJK SC", "Noto Sans CJK SC", serif;
}

td:last-child,
thead th:last-child {
  border-right: 0;
}

td.boxed {
  border-color: #000;
  padding-bottom: 6px;
}

.r1 th, .r1 td { height: 106px; }
.r2 th, .r2 td { height: 95px; }

.cursor-cell {
  position: relative;
  overflow: visible;
}

.selection {
  position: absolute;
  inset: -2px;
  border: 2px solid #217346;
}

.selection::after {
  content: "";
  position: absolute;
  right: -3px;
  bottom: -3px;
  width: 6px;
  height: 6px;
  background: #217346;
  border: 1px solid #fff;
  border-width: 1px 0 0 1px;
}

.pointer {
  position: absolute;
  left: 108px;
  top: 41px;
}

.vscroll {
  position: relative;
  width: 21px;
  padding: 2px 4px 0 3px;
  display: flex;
  flex-direction: column;
}

.vscroll button {
  height: 15px;
  border: 1px solid #aaa;
  background: #fff;
}

.vscroll .track {
  flex: 1;
  background: #d4d4d4;
}

.vscroll .thumb {
  height: 50%;
  border: 1px solid #aaa;
  background: #fff;
}

.meter {
  position: absolute;
  right: 3px;
  bottom: 0;
  width: 7px;
  height: 57px;
  border-radius: 3px;
  background: linear-gradient(#8a8a80 65%, #20b050 65%, #5fe080);
}

/* sheet tabs */
.sheet-bar {
  flex: none;
  display: flex;
  height: 28px;
  border-top: 1px solid #888;
}

.sheet-nav {
  width: 100px;
  display: flex;
  align-items: center;
  gap: 22px;
  padding-left: 26px;
}

.sheet-tab {
  width: 69px;
  height: 25px;
  margin-top: -1px;
  border: 1px solid #999;
  border-top: 0;
  border-bottom: 2px solid #217346;
  background: #fff;
  color: #217346;
  font-size: 13px;
}

.add-sheet { margin-left: 32px; }

.hscroll {
  margin-left: auto;
  width: 41%;
  display: flex;
  padding: 6px 22px 6px 0;
}

.hscroll .dots { margin: 0; }

.hscroll button {
  width: 15px;
  border: 1px solid #aaa;
  background: #fff;
}

.hscroll .track {
  flex: 1;
  background: #d4d4d4;
}

.hscroll .thumb {
  width: 87%;
  height: 100%;
  border: 1px solid #aaa;
  background: #fff;
}

/* status bar */
.status {
  flex: none;
  display: flex;
  align-items: center;
  height: 22px;
  padding: 0 8px 0 7px;
  border-top: 1px solid #c6c6d6;
  background: #f2f2f2;
  color: #444;
}

.views {
  display: flex;
  margin-left: auto;
}

.views button {
  width: 38px;
  height: 21px;
}

.views .on { background: #c8c8cc; }

.zoom {
  display: flex;
  align-items: center;
  gap: 4px;
}

.zoom span { width: 32px; margin-left: 12px; text-align: right; }

.zoom input {
  appearance: none;
  width: 102px;
  height: 12px;
  background: linear-gradient(#999, #999) center / 1px 6px no-repeat, linear-gradient(#999, #999) center / 100% 1px no-repeat;
}

.zoom input::-webkit-slider-thumb {
  appearance: none;
  width: 4px;
  height: 12px;
  background: #555;
}

/* taskbar */
.taskbar {
  flex: none;
  display: flex;
  align-items: center;
  height: 40px;
  padding-left: 8px;
  border-top: 1px solid #2e1c1c;
  color: #fff;
  background:
    linear-gradient(172deg, transparent 50%, #3a1e1a 75%) 1240px 0 / 345px 40px no-repeat,
    linear-gradient(160deg, transparent 50%, #35201c 62%) 270px 0 / 110px 40px no-repeat,
    linear-gradient(90deg, #4a2a26 0, #32221f 60px, #32221f 110px, #6a3228 150px, #6b352a 210px, #a5806a 250px, #a5806a 340px, #3a1e1c 390px, #3a201c 440px, #8a5c4e 500px, #8f5846 720px, #9c6a54 900px, #98644e 1200px, #8c5444 1480px, #5a382c 1580px, #6d5f47 1595px, #70624a);
}

.start { width: 38px; }

.grip {
  width: 8px;
  height: 32px;
  margin-left: 12px;
  background: radial-gradient(circle, #110c0a 1px, transparent 1px) 0 0 / 4px 4px;
}

.app {
  width: 62px;
  height: 38px;
}

.grip + .app { margin-left: 8px; }

.running {
  display: flex;
  gap: 4px;
  margin-left: 2px;
}

.win {
  width: 58px;
  height: 38px;
  border: 1px solid #d8c0b4;
  border-radius: 3px;
  background: linear-gradient(160deg, #a88c84, #7c5448 55%, #8e6a5c);
}

.win.active { background: linear-gradient(160deg, #efe6e2, #c4a89c 60%, #cdb4aa); }

.tray {
  display: flex;
  align-items: center;
  align-self: stretch;
  margin-left: auto;
  gap: 8px;
}

.tray .grip { align-self: center; }
.tray > .caret { margin: 0 2px 0 9px; }

.t-restore { margin-bottom: 4px; }

.clock {
  display: flex;
  flex-direction: column;
  align-items: center;
  width: 88px;
  font-size: 12px;
  line-height: 17px;
}

.t-note { margin-right: 2px; }

.show-desktop {
  width: 23px;
  height: 38px;
  border: 1px solid #98907c;
  background: linear-gradient(#7c7360, #4c4436);
}

/* input method toolbar */
.ime {
  position: absolute;
  right: 4px;
  bottom: 206px;
  display: flex;
  align-items: center;
  gap: 6px;
  height: 24px;
  padding: 0 3px 0 4px;
  border: 1px solid #aaa;
  background: #fff;
}

.ime svg { width: 16px; height: 16px; }

.ime .ime-logo {
  width: 28px;
  height: 28px;
  margin: -3px 0 0 -28px;
}
```
